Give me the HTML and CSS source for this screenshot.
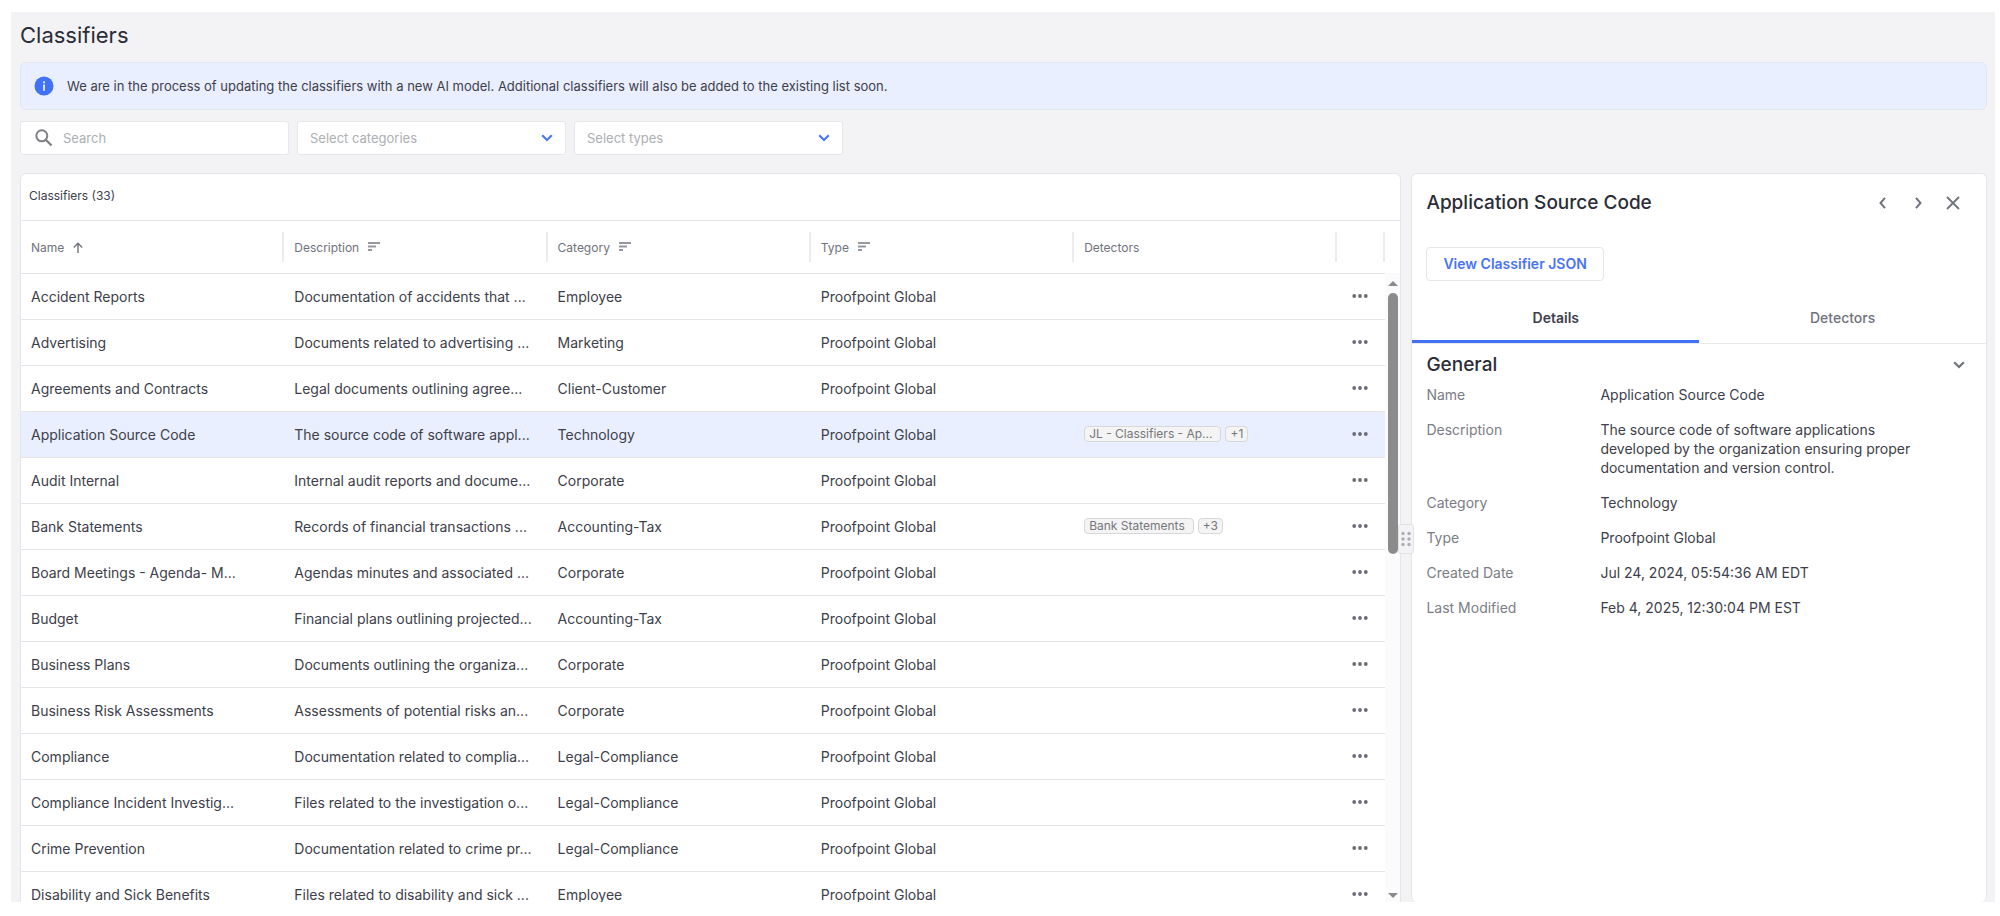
FILE: index.html
```html
<!DOCTYPE html>
<html lang="en">
<head>
  <meta charset="UTF-8">
  <meta name="viewport" content="width=device-width, initial-scale=1.0">
  <title>Classifiers</title>
  <link rel="stylesheet" href="styles.css">
</head>
<body>
  <!-- Shared icons -->
  <svg class="sprite" aria-hidden="true">
    <symbol id="icon-sort" viewBox="0 0 12 10">
      <path d="M0 1h12M0 4.5h8M0 8h4" fill="none" stroke="currentColor" stroke-width="1.8"/>
    </symbol>
    <symbol id="icon-more" viewBox="0 0 16 4">
      <circle cx="2.2" cy="2" r="1.9"/><circle cx="8" cy="2" r="1.9"/><circle cx="13.8" cy="2" r="1.9"/>
    </symbol>
    <symbol id="icon-chevron" viewBox="0 0 12 8">
      <path d="M1.2 1.2L6 6l4.8-4.8" fill="none" stroke="currentColor" stroke-width="2.2"/>
    </symbol>
  </svg>

  <main class="app">
    <h1>Classifiers</h1>

    <div class="banner">
      <svg class="info-icon" viewBox="0 0 20 20" aria-hidden="true">
        <circle cx="10" cy="10" r="9.5" fill="#4171f5"/>
        <path d="M9.1 5.3h1.9v1.9H9.1zM9.1 8.5h1.9v6.2H9.1z" fill="#dfe8ff"/>
      </svg>
      <p>We are in the process of updating the classifiers with a new AI model. Additional classifiers will also be added to the existing list soon.</p>
    </div>

    <div class="filters">
      <div class="field">
        <svg class="search-icon" viewBox="0 0 18 18" aria-hidden="true">
          <circle cx="6.8" cy="6.8" r="5.5" fill="none" stroke="currentColor" stroke-width="2"/>
          <path d="M10.8 10.8l5.7 5.7" stroke="currentColor" stroke-width="2.3"/>
        </svg>
        <input type="text" class="search" placeholder="Search" aria-label="Search">
      </div>
      <div class="field">
        <select aria-label="Categories">
          <option>Select categories</option>
        </select>
        <svg class="select-icon" aria-hidden="true"><use href="#icon-chevron"/></svg>
      </div>
      <div class="field">
        <select aria-label="Types">
          <option>Select types</option>
        </select>
        <svg class="select-icon" aria-hidden="true"><use href="#icon-chevron"/></svg>
      </div>
    </div>

    <div class="content">
      <section class="list">
        <h2 class="list-title">Classifiers (33)</h2>
        <div class="list-body">
          <div class="table-wrap">
            <table>
              <colgroup>
                <col><col><col><col><col><col class="col-actions">
              </colgroup>
              <thead>
                <tr>
                  <th><div class="head">Name
                    <svg class="arrow-icon" viewBox="0 0 10 11" aria-hidden="true"><path d="M5 11V1.5M.8 5.5L5 1.3l4.2 4.2" fill="none" stroke="currentColor" stroke-width="1.4"/></svg>
                  </div></th>
                  <th><div class="head">Description <svg class="sort-icon" aria-hidden="true"><use href="#icon-sort"/></svg></div></th>
                  <th><div class="head">Category <svg class="sort-icon" aria-hidden="true"><use href="#icon-sort"/></svg></div></th>
                  <th><div class="head">Type <svg class="sort-icon" aria-hidden="true"><use href="#icon-sort"/></svg></div></th>
                  <th><div class="head">Detectors</div></th>
                  <th><div class="head"></div></th>
                </tr>
              </thead>
              <tbody>
                <tr>
                  <td>Accident Reports</td>
                  <td>Documentation of accidents that ...</td>
                  <td>Employee</td>
                  <td>Proofpoint Global</td>
                  <td></td>
                  <td><button class="more" aria-label="Actions"><svg><use href="#icon-more"/></svg></button></td>
                </tr>
                <tr>
                  <td>Advertising</td>
                  <td>Documents related to advertising ...</td>
                  <td>Marketing</td>
                  <td>Proofpoint Global</td>
                  <td></td>
                  <td><button class="more" aria-label="Actions"><svg><use href="#icon-more"/></svg></button></td>
                </tr>
                <tr>
                  <td>Agreements and Contracts</td>
                  <td>Legal documents outlining agree...</td>
                  <td>Client-Customer</td>
                  <td>Proofpoint Global</td>
                  <td></td>
                  <td><button class="more" aria-label="Actions"><svg><use href="#icon-more"/></svg></button></td>
                </tr>
                <tr class="selected">
                  <td>Application Source Code</td>
                  <td>The source code of software appl...</td>
                  <td>Technology</td>
                  <td>Proofpoint Global</td>
                  <td><div class="chips"><span class="chip">JL - Classifiers - Ap...</span><span class="chip count">+1</span></div></td>
                  <td><button class="more" aria-label="Actions"><svg><use href="#icon-more"/></svg></button></td>
                </tr>
                <tr>
                  <td>Audit Internal</td>
                  <td>Internal audit reports and docume...</td>
                  <td>Corporate</td>
                  <td>Proofpoint Global</td>
                  <td></td>
                  <td><button class="more" aria-label="Actions"><svg><use href="#icon-more"/></svg></button></td>
                </tr>
                <tr>
                  <td>Bank Statements</td>
                  <td>Records of financial transactions ...</td>
                  <td>Accounting-Tax</td>
                  <td>Proofpoint Global</td>
                  <td><div class="chips"><span class="chip">Bank Statements</span><span class="chip count">+3</span></div></td>
                  <td><button class="more" aria-label="Actions"><svg><use href="#icon-more"/></svg></button></td>
                </tr>
                <tr>
                  <td>Board Meetings - Agenda- M...</td>
                  <td>Agendas minutes and associated ...</td>
                  <td>Corporate</td>
                  <td>Proofpoint Global</td>
                  <td></td>
                  <td><button class="more" aria-label="Actions"><svg><use href="#icon-more"/></svg></button></td>
                </tr>
                <tr>
                  <td>Budget</td>
                  <td>Financial plans outlining projected...</td>
                  <td>Accounting-Tax</td>
                  <td>Proofpoint Global</td>
                  <td></td>
                  <td><button class="more" aria-label="Actions"><svg><use href="#icon-more"/></svg></button></td>
                </tr>
                <tr>
                  <td>Business Plans</td>
                  <td>Documents outlining the organiza...</td>
                  <td>Corporate</td>
                  <td>Proofpoint Global</td>
                  <td></td>
                  <td><button class="more" aria-label="Actions"><svg><use href="#icon-more"/></svg></button></td>
                </tr>
                <tr>
                  <td>Business Risk Assessments</td>
                  <td>Assessments of potential risks an...</td>
                  <td>Corporate</td>
                  <td>Proofpoint Global</td>
                  <td></td>
                  <td><button class="more" aria-label="Actions"><svg><use href="#icon-more"/></svg></button></td>
                </tr>
                <tr>
                  <td>Compliance</td>
                  <td>Documentation related to complia...</td>
                  <td>Legal-Compliance</td>
                  <td>Proofpoint Global</td>
                  <td></td>
                  <td><button class="more" aria-label="Actions"><svg><use href="#icon-more"/></svg></button></td>
                </tr>
                <tr>
                  <td>Compliance Incident Investig...</td>
                  <td>Files related to the investigation o...</td>
                  <td>Legal-Compliance</td>
                  <td>Proofpoint Global</td>
                  <td></td>
                  <td><button class="more" aria-label="Actions"><svg><use href="#icon-more"/></svg></button></td>
                </tr>
                <tr>
                  <td>Crime Prevention</td>
                  <td>Documentation related to crime pr...</td>
                  <td>Legal-Compliance</td>
                  <td>Proofpoint Global</td>
                  <td></td>
                  <td><button class="more" aria-label="Actions"><svg><use href="#icon-more"/></svg></button></td>
                </tr>
                <tr>
                  <td>Disability and Sick Benefits</td>
                  <td>Files related to disability and sick ...</td>
                  <td>Employee</td>
                  <td>Proofpoint Global</td>
                  <td></td>
                  <td><button class="more" aria-label="Actions"><svg><use href="#icon-more"/></svg></button></td>
                </tr>
              </tbody>
            </table>
          </div>
          <div class="scrollbar" aria-hidden="true">
            <span class="scroll-up"></span>
            <div class="scroll-track"><div class="scroll-thumb"></div></div>
            <span class="scroll-down"></span>
          </div>
        </div>
      </section>

      <aside class="detail">
        <button class="drag-handle" aria-label="Resize panel">
          <svg viewBox="0 0 10 16">
            <circle cx="2" cy="2.5" r="1.7"/><circle cx="8" cy="2.5" r="1.7"/>
            <circle cx="2" cy="8" r="1.7"/><circle cx="8" cy="8" r="1.7"/>
            <circle cx="2" cy="13.5" r="1.7"/><circle cx="8" cy="13.5" r="1.7"/>
          </svg>
        </button>
        <header class="detail-header">
          <h2>Application Source Code</h2>
          <div class="detail-nav">
            <button aria-label="Previous"><svg viewBox="0 0 14 14"><path d="M9 1.8L4.5 7 9 12.2" fill="none" stroke="currentColor" stroke-width="2"/></svg></button>
            <button aria-label="Next"><svg viewBox="0 0 14 14"><path d="M5 1.8L9.5 7 5 12.2" fill="none" stroke="currentColor" stroke-width="2"/></svg></button>
            <button aria-label="Close"><svg viewBox="0 0 14 14"><path d="M1 1l12 12M13 1L1 13" fill="none" stroke="currentColor" stroke-width="1.8"/></svg></button>
          </div>
        </header>
        <button class="json-btn">View Classifier JSON</button>
        <div class="tabs" role="tablist">
          <button class="tab active" role="tab" aria-selected="true">Details</button>
          <button class="tab" role="tab" aria-selected="false">Detectors</button>
        </div>
        <div class="section-head">
          <h3>General</h3>
          <button aria-label="Collapse General"><svg><use href="#icon-chevron"/></svg></button>
        </div>
        <dl>
          <dt>Name</dt>
          <dd>Application Source Code</dd>
          <dt>Description</dt>
          <dd>The source code of software applications developed by the organization ensuring proper documentation and version control.</dd>
          <dt>Category</dt>
          <dd>Technology</dd>
          <dt>Type</dt>
          <dd>Proofpoint Global</dd>
          <dt>Created Date</dt>
          <dd>Jul 24, 2024, 05:54:36 AM EDT</dd>
          <dt>Last Modified</dt>
          <dd>Feb 4, 2025, 12:30:04 PM EST</dd>
        </dl>
      </aside>
    </div>
  </main>
</body>
</html>
```

FILE: styles.css
```css
* {
  box-sizing: border-box;
}

body {
  margin: 0;
  height: 100vh;
  padding: 12px 5px 14px 11px;
  background-color: #fff;
  color: #3d404a;
  font-family: Inter, sans-serif;
  font-size: 14px;
}

h1, h2, h3, p, dl, dd {
  margin: 0;
}

button {
  padding: 0;
  border: none;
  background: none;
  font-family: inherit;
  color: #70737b;
  cursor: pointer;
}

svg {
  display: block;
}

.sprite {
  position: absolute;
  width: 0;
  height: 0;
}

.app {
  display: flex;
  flex-direction: column;
  height: 100%;
  padding: 8px 8px 0 9px;
  background-color: #f3f3f6;
  overflow: hidden;
}

h1 {
  margin-bottom: 12px;
  font-size: 22px;
  line-height: 30px;
  font-weight: 400;
  color: #2b2d38;
}

/* Banner */
.banner {
  display: flex;
  align-items: center;
  gap: 13px;
  height: 48px;
  padding: 0 13px;
  border: 1px solid #e3e6ee;
  border-radius: 6px;
  background-color: #e9effe;
  font-size: 13px;
}

.info-icon {
  width: 20px;
  height: 20px;
}

/* Filters */
.filters {
  display: flex;
  gap: 8px;
  margin: 11px 0 18px;
}

.field {
  position: relative;
  flex: 0 1 269px;
}

.field input,
.field select {
  display: block;
  width: 100%;
  height: 34px;
  padding: 0 12px;
  border: 1px solid #e7e7ea;
  border-radius: 3px;
  background-color: #fff;
  font-family: inherit;
  font-size: 13px;
  color: #adafb3;
  appearance: none;
}

.field .search {
  padding-left: 42px;
}

.field input::placeholder {
  color: #adafb3;
}

.search-icon {
  position: absolute;
  left: 15px;
  top: 8px;
  width: 18px;
  height: 18px;
  color: #7d7f84;
}

.select-icon {
  position: absolute;
  right: 13px;
  top: 13px;
  width: 12px;
  height: 8px;
  color: #4a78f5;
}

/* Classifier list */
.content {
  flex: 1;
  display: grid;
  grid-template-columns: 12fr 5fr;
  gap: 10px;
  min-height: 0;
}

.list,
.detail {
  min-width: 0;
  border: 1px solid #e6e6ea;
  border-bottom: none;
  background-color: #fff;
}

.list {
  display: flex;
  flex-direction: column;
  border-radius: 6px 6px 0 0;
  overflow: hidden;
}

.list-title {
  flex: none;
  height: 47px;
  padding: 0 8px;
  border-bottom: 1px solid #e5e5e8;
  font-size: 12px;
  line-height: 44px;
  font-weight: 400;
}

.list-body {
  flex: 1;
  display: flex;
  min-height: 0;
}

.table-wrap {
  flex: 1;
  min-width: 0;
  overflow: hidden;
}

table {
  width: 100%;
  border-collapse: separate;
  border-spacing: 0;
  table-layout: fixed;
}

.col-actions {
  width: 48px;
}

th {
  height: 53px;
  padding: 0;
  border-bottom: 1px solid #e5e5e8;
  font-size: 12px;
  font-weight: 400;
  color: #70737b;
}

.head {
  display: flex;
  align-items: center;
  gap: 9px;
  height: 30px;
  padding-left: 10px;
  border-right: 2px solid #ececee;
}

.arrow-icon {
  width: 10px;
  height: 11px;
}

.sort-icon {
  width: 12px;
  height: 10px;
  color: #96989d;
}

td {
  height: 46px;
  padding: 0 0 1px 10px;
  border-bottom: 1px solid #e5e5e8;
  white-space: nowrap;
  overflow: hidden;
}

.selected td {
  background-color: #e9effe;
}

.chips {
  display: flex;
  gap: 4px;
}

.chip {
  height: 16px;
  padding: 0 8px 0 4px;
  border: 1px solid #d8d8da;
  border-radius: 4px;
  background-color: #f4f4f5;
  font-size: 12px;
  line-height: 13px;
  color: #75777c;
}

.chip.count {
  padding: 0 4px;
}

.more {
  display: block;
  padding: 6px 5px;
}

.more svg {
  width: 16px;
  height: 4px;
  fill: #6a6d76;
}

/* Scrollbar */
.scrollbar {
  display: flex;
  flex-direction: column;
  align-items: center;
  width: 15px;
  margin-top: 52px;
  padding: 8px 0 4px;
  background-color: #fbfbfb;
}

.scroll-up,
.scroll-down {
  border: 5px solid transparent;
}

.scroll-up {
  border-top: none;
  border-bottom-color: #8b8b8b;
}

.scroll-down {
  border-bottom: none;
  border-top-color: #8b8b8b;
}

.scroll-track {
  flex: 1;
  padding: 7px 0;
}

.scroll-thumb {
  width: 10px;
  height: 44%;
  border-radius: 5px;
  background-color: #8b8b8b;
}

/* Detail panel */
.detail {
  position: relative;
  border-radius: 6px;
}

.drag-handle {
  position: absolute;
  left: -14px;
  top: 50%;
  width: 16px;
  height: 30px;
  margin-top: -14px;
  padding: 0 2px;
  border: 1px solid #e3e3e7;
  border-radius: 3px;
  background-color: #f3f3f6;
}

.drag-handle svg {
  width: 10px;
  height: 16px;
  fill: #adaeb3;
}

.detail-header {
  display: flex;
  align-items: center;
  justify-content: space-between;
  padding: 17px 26px 0 14px;
}

.detail-header h2,
.section-head h3 {
  font-size: 19px;
  line-height: 24px;
  font-weight: 500;
  color: #2b2d38;
}

.detail-nav {
  display: flex;
  gap: 21px;
}

.detail-nav svg {
  width: 14px;
  height: 14px;
}

.json-btn {
  height: 34px;
  margin: 32px 14px 0;
  padding: 0 16px 1px;
  border: 1px solid #e5e6ea;
  border-radius: 4px;
  background-color: #fff;
  font-size: 14px;
  font-weight: 600;
  color: #4a73f5;
}

.tabs {
  display: flex;
  margin-top: 13px;
  border-bottom: 1px solid #e9e9ec;
}

.tab {
  flex: 1;
  height: 49px;
  border-bottom: 3px solid transparent;
  font-size: 14px;
  font-weight: 500;
}

.tab.active {
  border-bottom-color: #4171f5;
  font-weight: 600;
  color: #3d404a;
}

.section-head {
  display: flex;
  align-items: center;
  justify-content: space-between;
  padding: 9px 21px 0 14px;
}

.section-head svg {
  width: 12px;
  height: 8px;
}

dl {
  display: grid;
  grid-template-columns: 174px 1fr;
  row-gap: 16px;
  padding: 8px 38px 0 14px;
  line-height: 19px;
}

dt {
  color: #7b7d84;
}
```
